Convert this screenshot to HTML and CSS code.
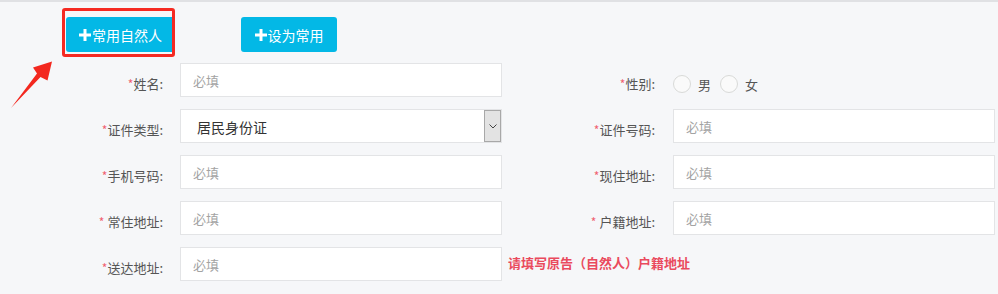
FILE: index.html
```html
<!DOCTYPE html>
<html lang="zh-CN">
<head>
    <meta charset="UTF-8">
    <meta name="viewport" content="width=device-width, initial-scale=1.0">
    <title>原告信息</title>
    <link rel="stylesheet" href="styles.css">
</head>
<body>
<div class="page">

    <!-- 顶部按钮 -->
    <div class="toolbar">
        <button class="btn btn-wide"><svg class="plus" viewBox="0 0 12 12"><rect x="4.5" y="0" width="3" height="12"/><rect x="0" y="4.5" width="12" height="3"/></svg>常用自然人</button>
        <button class="btn"><svg class="plus" viewBox="0 0 12 12"><rect x="4.5" y="0" width="3" height="12"/><rect x="0" y="4.5" width="12" height="3"/></svg>设为常用</button>
    </div>

    <!-- 表单 -->
    <div class="form">
        <div class="row">
            <div class="group">
                <label class="lbl"><i>*</i>姓名:</label>
                <input class="input" type="text" placeholder="必填">
            </div>
            <div class="group group-right">
                <label class="lbl"><i>*</i>性别:</label>
                <div class="radios">
                    <span class="radio"></span><span class="radio-text">男</span>
                    <span class="radio"></span><span class="radio-text">女</span>
                </div>
            </div>
        </div>

        <div class="row">
            <div class="group">
                <label class="lbl"><i>*</i>证件类型:</label>
                <div class="select">
                    <span class="select-text">居民身份证</span>
                    <span class="select-arrow"><svg viewBox="0 0 8 5" width="8" height="5"><path d="M0.5 0.5 L4 4 L7.5 0.5" fill="none" stroke="#444" stroke-width="1"/></svg></span>
                </div>
            </div>
            <div class="group group-right">
                <label class="lbl"><i>*</i>证件号码:</label>
                <input class="input" type="text" placeholder="必填">
            </div>
        </div>

        <div class="row">
            <div class="group">
                <label class="lbl"><i>*</i>手机号码:</label>
                <input class="input" type="text" placeholder="必填">
            </div>
            <div class="group group-right">
                <label class="lbl"><i>*</i>现住地址:</label>
                <input class="input" type="text" placeholder="必填">
            </div>
        </div>

        <div class="row">
            <div class="group">
                <label class="lbl"><i>*</i> 常住地址:</label>
                <input class="input" type="text" placeholder="必填">
            </div>
            <div class="group group-right">
                <label class="lbl"><i>*</i> 户籍地址:</label>
                <input class="input" type="text" placeholder="必填">
            </div>
        </div>

        <div class="row">
            <div class="group">
                <label class="lbl"><i>*</i>送达地址:</label>
                <input class="input" type="text" placeholder="必填">
            </div>
            <span class="hint">请填写原告（自然人）户籍地址</span>
        </div>
    </div>

    <!-- 标注 -->
    <div class="mark-box"></div>
    <svg class="mark-arrow" viewBox="0 0 60 115" width="60" height="115">
        <polygon points="11,108 37,73.5 33,67.5 52,61.5 47.5,80.5 40.5,77" fill="#f3281f"/>
    </svg>
</div>
</body>
</html>
```

FILE: styles.css
```css
body {
    margin: 0;
    background: #f6f7f9;
    font-family: "Noto Sans CJK SC", "Noto Sans", sans-serif;
    font-size: 13px;
    color: #555;
}
.page {
    position: relative;
    height: 292px;
    border-top: 2px solid #e0e1e4;
    background: #f6f7f9;
}

/* 按钮 */
.toolbar {
    display: flex;
    gap: 66px;
    padding: 15px 0 0 66px;
}
.btn {
    display: inline-flex;
    align-items: center;
    justify-content: center;
    gap: 1px;
    width: 96px;
    height: 35px;
    padding: 0;
    border: none;
    border-radius: 3px;
    background: #03b8e6;
    color: #fff;
    font-family: inherit;
    font-size: 14px;
    cursor: pointer;
}
.btn-wide { width: 109px; }
.plus { width: 12px; height: 12px; fill: #fff; }

/* 表单 */
.form { padding-top: 11px; }
.row {
    display: flex;
    height: 34px;
    margin-bottom: 12px;
}
.group { display: flex; }
.lbl {
    width: 163px;
    margin-right: 17px;
    padding-top: 11px;
    line-height: 20px;
    text-align: right;
    color: #555;
    white-space: pre;
}
.group-right .lbl { width: 153px; margin-right: 18px; }
.lbl i {
    font-style: normal;
    color: #f0606f;
    font-size: 12px;
}
.input {
    width: 322px;
    height: 34px;
    box-sizing: border-box;
    margin: 0;
    padding: 0 12px;
    border: 1px solid #e3e4e6;
    background: #fff;
    font-family: inherit;
    font-size: 13px;
    color: #333;
    outline: none;
}
.input::placeholder { color: #a3a3a3; }

.select {
    display: flex;
    width: 322px;
    height: 34px;
    box-sizing: border-box;
    border: 1px solid #e3e4e6;
    background: #fff;
}
.select-text {
    flex: 1;
    padding-left: 16px;
    line-height: 34px;
    font-size: 14px;
    color: #333;
}
.select-arrow {
    display: flex;
    align-items: center;
    justify-content: center;
    width: 17px;
    box-sizing: border-box;
    border: 1px solid #a8a8a8;
    background: #e3e3e3;
}

.radios {
    display: flex;
    align-items: center;
    height: 18px;
    padding-top: 12px;
}
.radio {
    width: 18px;
    height: 18px;
    box-sizing: border-box;
    border: 1px solid #d9dad8;
    border-radius: 50%;
    background: #fafafa;
}
.radio-text { margin: 0 9px 0 7px; color: #555; }

.hint {
    margin-left: 6px;
    line-height: 32px;
    color: #ea4a5d;
    font-weight: bold;
}

/* 截图标注 */
.mark-box {
    position: absolute;
    left: 62px;
    top: 6px;
    width: 113px;
    height: 49px;
    box-sizing: border-box;
    border: 3px solid #f52a22;
    border-radius: 3px;
}
.mark-arrow {
    position: absolute;
    left: 0;
    top: -2px;
}
```
